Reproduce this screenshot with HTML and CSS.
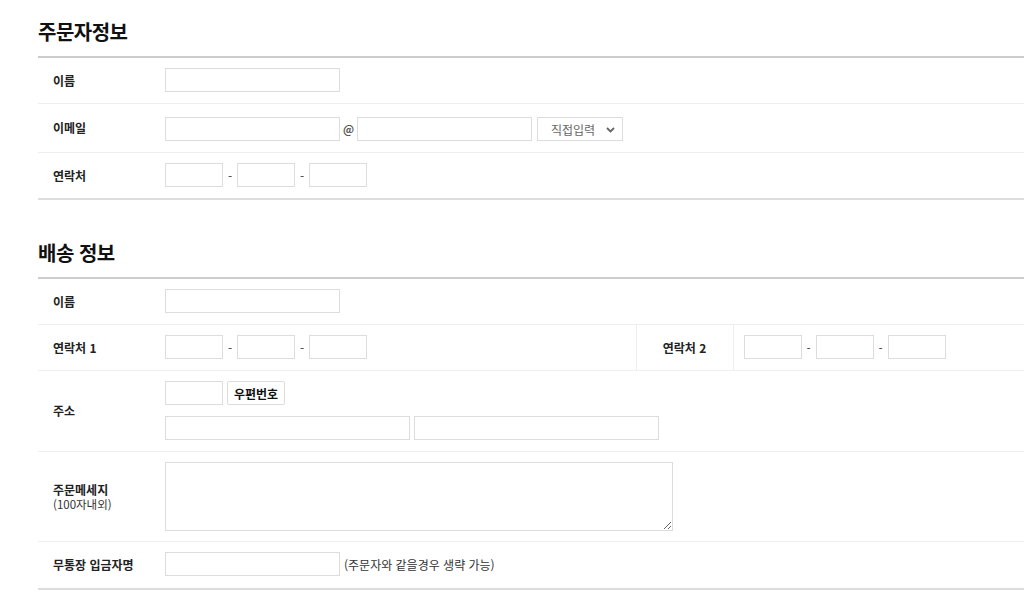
FILE: index.html
```html
<!DOCTYPE html>
<html lang="ko">
<head>
<meta charset="utf-8">
<link rel="stylesheet" href="styles.css">
</head>
<body>
<div class="page">
  <h2 class="sec-title first">주문자정보</h2>
  <table class="form-table">
    <tr>
      <th>이름</th>
      <td colspan="3"><input class="in in-name" type="text"></td>
    </tr>
    <tr class="row-email">
      <th>이메일</th>
      <td colspan="3">
        <div class="line">
          <input class="in in-name" type="text"><span class="at">@</span><input class="in in-name" type="text"><span class="sel-wrap"><select class="sel"><option>직접입력</option></select><svg class="chev" width="9" height="6" viewBox="0 0 9 6"><path d="M1 1 L4.5 4.5 L8 1" fill="none" stroke="#666" stroke-width="1.8"/></svg></span>
        </div>
      </td>
    </tr>
    <tr>
      <th>연락처</th>
      <td colspan="3">
        <div class="line phone"><input class="in in-ph" type="text"><span class="dash">-</span><input class="in in-ph" type="text"><span class="dash">-</span><input class="in in-ph" type="text"></div>
      </td>
    </tr>
  </table>

  <h2 class="sec-title">배송 정보</h2>
  <table class="form-table">
    <tr>
      <th>이름</th>
      <td colspan="3"><input class="in in-name" type="text"></td>
    </tr>
    <tr>
      <th>연락처 1</th>
      <td class="td-half">
        <div class="line phone"><input class="in in-ph" type="text"><span class="dash">-</span><input class="in in-ph" type="text"><span class="dash">-</span><input class="in in-ph" type="text"></div>
      </td>
      <th class="th-mid">연락처 2</th>
      <td class="td-right">
        <div class="line phone"><input class="in in-ph" type="text"><span class="dash">-</span><input class="in in-ph" type="text"><span class="dash">-</span><input class="in in-ph" type="text"></div>
      </td>
    </tr>
    <tr>
      <th>주소</th>
      <td colspan="3">
        <div class="addr">
          <div class="line zip"><input class="in in-ph" type="text"><button class="btn" type="button">우편번호</button></div>
          <div class="line addr2"><input class="in in-addr" type="text"><input class="in in-addr" type="text"></div>
        </div>
      </td>
    </tr>
    <tr class="row-msg">
      <th>주문메세지<br><span class="sub">(100자내외)</span></th>
      <td colspan="3"><textarea class="ta"></textarea></td>
    </tr>
    <tr class="row-last">
      <th>무통장 입금자명</th>
      <td colspan="3"><div class="line"><input class="in in-name" type="text"><span class="note">(주문자와 같을경우 생략 가능)</span></div></td>
    </tr>
  </table>
</div>
</body>
</html>
```
FILE: styles.css
```css
* { box-sizing: border-box; }
html, body { margin: 0; padding: 0; background: #fff; overflow: hidden; }
body {
  font-family: "Noto Sans CJK KR", "Noto Sans", "Liberation Sans", sans-serif;
  font-size: 12px;
  color: #222;
}
.page { padding-left: 38px; }
.sec-title {
  margin: 0;
  height: 56px;
  padding-top: 18px;
  font-size: 20px;
  font-weight: 700;
  color: #111;
  line-height: 28px;
  letter-spacing: -0.5px;
}
.form-table + .sec-title { margin-top: 35px; height: 42px; padding-top: 4px; }
.form-table {
  width: 100%;
  border-collapse: collapse;
  border-top: 2px solid #ccc;
  border-bottom: 2px solid #ddd;
}
.form-table tr { border-bottom: 1px solid #eee; }
.form-table tr:last-child { border-bottom: none; }
.form-table th {
  width: 117px;
  padding: 0 0 0 15px;
  text-align: left;
  font-weight: 700;
  font-size: 12px;
  color: #222;
  vertical-align: middle;
  line-height: 14px;
}
.form-table th .sub { font-weight: 400; font-size: 11.5px; color: #333; }
.form-table td {
  padding: 10px 10px 11px 10px;
  vertical-align: middle;
}
.row-email td { padding-top: 13px; }
.row-msg td { padding-bottom: 10px; }
.row-last td { padding-bottom: 12px; }
.form-table td.td-half { width: 481px; }
.form-table th.th-mid {
  width: 97px;
  padding: 0;
  text-align: center;
  border-left: 1px solid #eee;
  border-right: 1px solid #eee;
}
.line { display: flex; align-items: center; }
.in {
  display: block;
  height: 24px;
  border: 1px solid #ddd;
  background: #fff;
  margin: 0;
  padding: 0 4px;
  font: inherit;
  outline: none;
}
.in-name { width: 175px; }
.in-ph { width: 58px; }
.in-addr { width: 245px; }
.at { width: 17px; text-align: center; font-size: 11px; font-weight: 700; color: #555; }
.dash { width: 14px; text-align: center; color: #444; font-size: 12px; }
.sel-wrap { position: relative; margin-left: 5px; display: block; }
.sel {
  display: block;
  width: 86px;
  height: 24px;
  border: 1px solid #ddd;
  background: #fff;
  appearance: none;
  -webkit-appearance: none;
  padding: 0 0 0 13px;
  font: inherit;
  font-size: 12px;
  color: #666;
  border-radius: 0;
}
.chev { position: absolute; right: 8px; top: 10px; }
.addr { display: flex; flex-direction: column; gap: 11px; }
.zip { gap: 4px; }
.btn {
  height: 24px;
  width: 58px;
  padding: 0;
  border: 1px solid #ddd;
  border-radius: 2px;
  background: #fff;
  font: inherit;
  font-weight: 700;
  font-size: 12px;
  color: #111;
}
.addr2 { gap: 4px; }
.ta {
  display: block;
  width: 508px;
  height: 69px;
  border: 1px solid #ddd;
  margin: 0;
  font: inherit;
  resize: both;
}
.note { margin-left: 4px; color: #333; font-size: 12px; }
```
